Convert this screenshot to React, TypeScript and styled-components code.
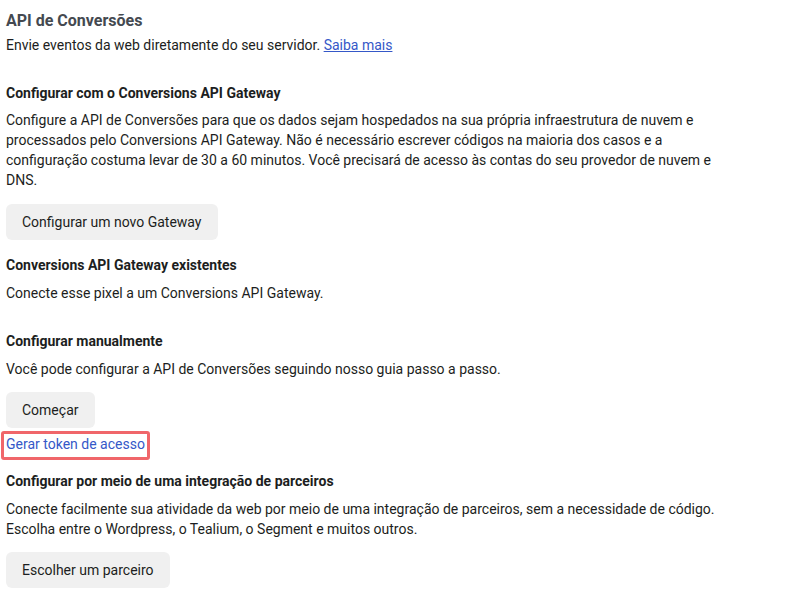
import React from "react";
import styled, { createGlobalStyle } from "styled-components";

const GlobalStyle = createGlobalStyle`
  body {
    margin: 0;
    background: #ffffff;
    font-family: Roboto, "Liberation Sans", Arial, sans-serif;
    color: #1c1e21;
  }
`;

type SectionProps = { $top: number };

export default function App() {
  return (
    <>
      <GlobalStyle />
      <Page>
        <Title>API de Conversões</Title>
        <Subtitle>
          Envie eventos da web diretamente do seu servidor. <UnderLink href="#">Saiba mais</UnderLink>
        </Subtitle>

        <Section $top={28}>
          <Heading>Configurar com o Conversions API Gateway</Heading>
          <Text $top={7}>
            Configure a API de Conversões para que os dados sejam hospedados na sua própria infraestrutura de nuvem e
            processados pelo Conversions API Gateway. Não é necessário escrever códigos na maioria dos casos e a
            configuração costuma levar de 30 a 60 minutos. Você precisará de acesso às contas do seu provedor de nuvem e
            DNS.
          </Text>
          <Button $top={14}>Configurar um novo Gateway</Button>
        </Section>

        <Section $top={15}>
          <Heading>Conversions API Gateway existentes</Heading>
          <Text $top={8}>Conecte esse pixel a um Conversions API Gateway.</Text>
        </Section>

        <Section $top={28}>
          <Heading>Configurar manualmente</Heading>
          <Text $top={8}>Você pode configurar a API de Conversões seguindo nosso guia passo a passo.</Text>
          <Button $top={13}>Começar</Button>
          <Highlight>
            <PlainLink href="#">Gerar token de acesso</PlainLink>
          </Highlight>
        </Section>

        <Section $top={11}>
          <Heading>Configurar por meio de uma integração de parceiros</Heading>
          <Text $top={8}>
            Conecte facilmente sua atividade da web por meio de uma integração de parceiros, sem a necessidade de código.
            Escolha entre o Wordpress, o Tealium, o Segment e muitos outros.
          </Text>
          <Button $top={13}>Escolher um parceiro</Button>
        </Section>
      </Page>
    </>
  );
}

const Page = styled.div`
  padding: 11px 6px;
  width: 730px;
  display: flex;
  flex-direction: column;
  align-items: flex-start;
`;

const Title = styled.h1`
  margin: 0;
  font-size: 16px;
  line-height: 20px;
  font-weight: 700;
  color: #444950;
`;

const Subtitle = styled.p`
  margin: 4px 0 0;
  font-size: 14px;
  line-height: 20px;
`;

const UnderLink = styled.a`
  color: #3558c8;
  text-decoration: underline;
`;

const Section = styled.section<SectionProps>`
  margin-top: ${(p) => p.$top}px;
  display: flex;
  flex-direction: column;
  align-items: flex-start;
`;

const Heading = styled.h2`
  margin: 0;
  font-size: 14px;
  line-height: 20px;
  font-weight: 700;
  color: #1c1e21;
`;

const Text = styled.p<SectionProps>`
  margin: ${(p) => p.$top}px 0 0;
  font-size: 14px;
  line-height: 20px;
`;

const Button = styled.button<SectionProps>`
  margin-top: ${(p) => p.$top}px;
  height: 36px;
  padding: 0 16px;
  border: none;
  border-radius: 6px;
  background: #f0f0f0;
  color: #1c1e21;
  font-family: inherit;
  font-size: 14px;
  cursor: pointer;
`;

const Highlight = styled.div`
  margin: 3px 0 0 -5px;
  padding: 0 2px 3px;
  border: 3px solid #f0666a;
  border-radius: 3px;
`;

const PlainLink = styled.a`
  display: block;
  font-size: 14px;
  line-height: 20px;
  color: #3558c8;
  text-decoration: none;
`;
